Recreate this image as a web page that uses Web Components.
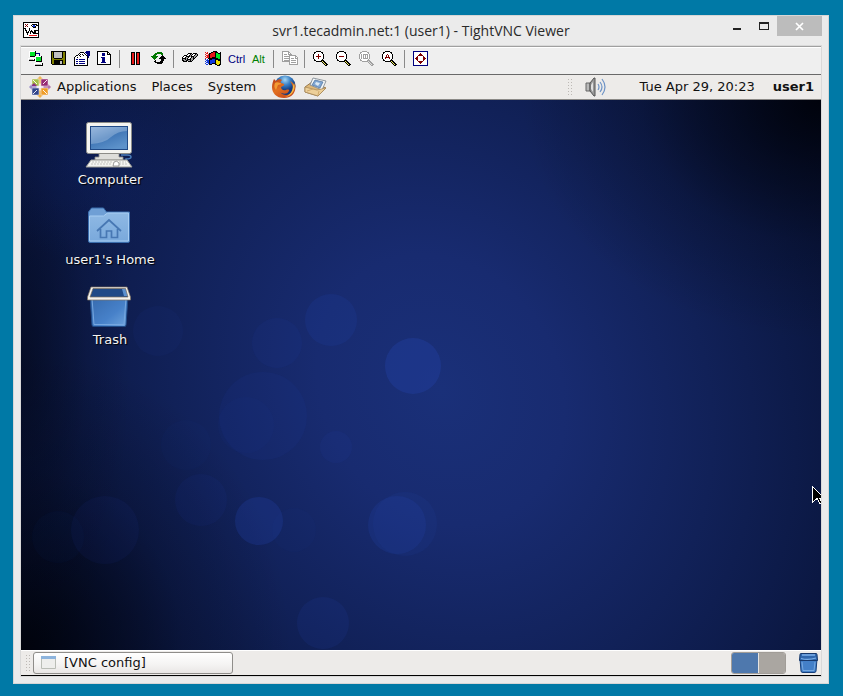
<!DOCTYPE html>
<html lang="en">
<head>
<meta charset="utf-8">
<title>svr1.tecadmin.net:1 (user1) - TightVNC Viewer</title>
<style>
  html, body { height: 100%; margin: 0; }
  body { background: #0079a6; font-family: "DejaVu Sans", sans-serif; font-size: 13px; color: #111; }
</style>
</head>
<body>
<vnc-viewer></vnc-viewer>

<script>
const RESET = `
  button { appearance: none; border: 0; margin: 0; padding: 0; background: none; font: inherit; color: inherit; cursor: default; }
  svg { display: block; flex: none; }
`;

function define(name, html, setup) {
  const template = document.createElement('template');
  template.innerHTML = html;
  customElements.define(name, class extends HTMLElement {
    constructor() {
      super();
      this.attachShadow({ mode: 'open' }).append(template.content.cloneNode(true));
    }
    connectedCallback() { if (setup) setup(this, this.shadowRoot); }
  });
}

/* Pixel icons: one character per pixel, looked up in the palette. */
const PALETTE = {
  K: '#000000', W: '#ffffff', G: '#00e828', N: '#000080', R: '#e81818', D: '#800000',
  O: '#808000', S: '#c0c0c0', A: '#a0a0a0', E: '#007800', Y: '#f0e000', B: '#1038e0',
  P: '#f4f060', L: '#dcdcdc'
};
const PIXELS = {
  vnc: [
    'KKKKKKKKKKKKKKKK','KWWWWWWWWWWWWWWK','KWDWDWWWWKKKKKWK','KWWDWWWWKWBBWKKK','KWDWDWWWWKBBKWWK','KWWWWWWWWWKKKWWK',
    'KKKWWWKWWWWWWWWK','KWKWWWKWWWWWWWWK','KWKKWWKWKWWKKKKK','KWWKWKWKKKWKKWWK','KWWKKKWKWKKKKWWK','KWWWKWWKWWKKKKKK',
    'KWWWKWWWWWWWWWWK','KWWWWWRRRRRRRRWK','KWWWWWWWWWWWWWWK','KKKKKKKKKKKKKKKK'],
  connect: [
    '.WWWWWWK........','.WGGGGGK........','.WGGGGGKNNNN....','.WGGGGGK...N....','.WGGGGGK...N....','.WKKKKKWWWWWWK..',
    '..WWW..WGGGGGK..','WWWWWW.WGGGGGK..','WSSSSWKWGGGGGK..','.KKKKKKWGGGGGK..','.......WKKKKKK..','........WWW.....',
    '......WWWWWWWWK.','......WSSSSSSWK.','.......KKKKKKKK.'],
  save: [
    'KKKKKKKKKKKKKKK.','KOKSSSSSSSSKOOK.','KOKSSSSSSSSKOOK.','KOKSSSSSSSSKOOK.','KOKSSSSSSSSKOOK.','KOKSSSSSSSSKOOK.',
    'KOKSSSSSSSSKOOK.','KOOKKKKKKKKOOOK.','KOOOOOOOOOOOOOK.','KOOKKKKKKKKKOOK.','KOOKKKKKKSSKOOK.','KOOKKKKKKSSKOOK.',
    'KOOKKKKKKSSKOOK.','.KKKKKKKKKKKKKK.'],
  options: [
    '............NNNN','......KKKK.NNNNN','.....KWWWWKWNNNN','....KWKWKWWKWNNN','..KKWKWWWKWWKNNN','.KWWWWKWWWWWWKN.',
    'KWWKWWWWWWWWWKN.','KWWWWWWWWWWWWK..','KWNNWNNNNNNWWK..','KWWWWWWWWWWWWK..','KWNNWNNNNNNWWK..','KWWWWWWWWWWWWK..',
    'KWNNWNNNNNNWWK..','KWWWWWWWWWWWWK..','KKKKKKKKKKKKKK..'],
  info: [
    'KKKKKKKKKKK.....','KWWWWWWWWWKK....','KWWWWNNNWWKWK...','KWWWWNNNWWKKKK..','KWWWWNNNWWWWWK..','KWWWWWWWWWWWWK..',
    'KWWWNNNNWWWWWK..','KWWWWNNNWWWWWK..','KWWWWNNNWWWWWK..','KWWWWNNNWWWWWK..','KWWWWNNNWWWWWK..','KWWWNNNNNWWWWK..',
    'KWWWWWWWWWWWWK..','KKKKKKKKKKKKKK..'],
  pause: [
    '................','...KKKK.KKKK....','...KRRK.KRRK....','...KRRK.KRRK....','...KRRK.KRRK....','...KRRK.KRRK....',
    '...KRRK.KRRK....','...KRRK.KRRK....','...KRRK.KRRK....','...KRRK.KRRK....','...KRRK.KRRK....','...KRRK.KRRK....',
    '...KRRK.KRRK....','...KKKK.KKKK....'],
  refresh: [
    '................','......EEEEE.....','....EEEEEEEE....','...EEE....EE....','..EEE......K....','EEEEEEE...KKK...',
    '.EEEEE...KKKKK..','..EEE...KKKKKKK.','...E......KKK...','....K.....KKK...','...KK....KKK....','....KKKKKKKK....',
    '......KKKKK.....'],
  keys: [
    '................','................','......KKKK.KKKK.','.....KWWKAKWWKAK','..KKKWWKAKWWKAAK','.KWWKKKKAKKKAAK.',
    'KWWKAAKWWKAKAK..','KKKKAKWWKAAKK...','KAAKAKKKKAAK....','KKAAKKAAKAK.....','.KKKK.KKKK......'],
  windows: [
    '........KKKK....','R.R...KKRRKKK..K','.RR.KKRRRRKGGKKK','R..RKRRRRRKGGGGK','.RRRKRRRRRKGGGGK','R.RRKRRRRRKGGGGK',
    '.RRRKRRKKKKGGGGK','R..KKKKKKKKKKGGK','B.B.KKKBBBKKKKKK','.BBBKBBBBBKYYKKK','B.BBKBBBBBKYYYYK','.BBBKBBBBBKYYYYK',
    'B..BKBBKKKKYYYYK','.BB.KKK...KKYYKK','............KKK.'],
  copy: [
    'AAAAAAA.........','AWWWWWAA........','AWWWWWAWA.......','AWAAAWAAAA......','AWWWWWWAAAAAAA..','AWAAAAAAWWWWWAA.',
    'AWWWWWWAWWWWWAWA','AWAAAAAAWAAAWAAA','AWWWWWWAWWWWWWWA','AWAAAAAAWAAAAAWA','AAAAAAAAWWWWWWWA','.......AWAAAAAWA',
    '.......AWWWWWWWA','.......AAAAAAAAA'],
  full: [
    'NNNNNNNNNNNNNNN.','NWWWWWWWWWWWWWN.','NWWWWWWDWWWWWWN.','NWWWWWDDDWWWWWN.','NWWWWDDDDDWWWWN.','NWWWDWWWWWDWWWN.',
    'NWWDDWWWWWDDWWN.','NWDDDWWWWWDDDWN.','NWWDDWWWWWDDWWN.','NWWWDWWWWWDWWWN.','NWWWWDDDDDWWWWN.','NWWWWWDDDWWWWWN.',
    'NWWWWWWDWWWWWWN.','NWWWWWWWWWWWWWN.','NNNNNNNNNNNNNNN.']
};
/* The four magnifiers share one lens and handle; only the mark in the lens differs. */
function lens(mark, off) {
  const rows = [
    '...KKKKK........','.KKWWWWWKK......','.KWWWWWWWK......','KWWWWWWWWWK.....','KWWWWWWWWWK.....','KWWWWWWWWWK.....',
    'KWWWWWWWWWK.....','KWWWWWWWWWK.....','.KWWWWWWWK......','.KKWWWWWKKK.....','...KKKKKKPKK....','.........KPKK...',
    '..........KPKK..','...........KPKK.','............KK..'].map(r => [...r]);
  mark.forEach((line, y) => [...line].forEach((c, x) => { if (c !== '.') rows[y + 2][x + 2] = c; }));
  return rows.map(r => r.join('')).map(r => off ? r.replace(/[KD]/g, 'A').replace(/P/g, 'L') : r);
}
PIXELS.zoomIn = lens(['.......', '...D...', '...D...', '.DDDDD.', '...D...', '...D...']);
PIXELS.zoomOut = lens(['.......', '.......', '.......', '.DDDDD.']);
PIXELS.zoom100 = lens(['.......', 'D.DDDDD', 'D.D.D.D', 'D.D.D.D', 'D.D.D.D', 'D.DDDDD'], true);
PIXELS.zoomAuto = lens(['.......', '...D...', '..D.D..', '..D.D..', '.DDDDD.', '.D...D.']);

define('pixel-icon', `<style>${RESET} :host { display: block; width: 16px; height: 16px; }</style>
<svg width="16" height="16" viewBox="0 0 16 16" shape-rendering="crispEdges" aria-hidden="true"></svg>`, (host, root) => {
  root.querySelector('svg').innerHTML = PIXELS[host.getAttribute('name')].map((row, y) =>
    [...row].map((c, x) => c === '.' ? '' : `<rect x="${x}" y="${y}" width="1" height="1" fill="${PALETTE[c]}"/>`).join('')).join('');
});

define('tool-button', `<style>${RESET}
  :host { display: block; }
  button { display: flex; align-items: center; width: 23px; height: 22px; padding-left: 3px;
    font: 12px "Liberation Sans", Arial, sans-serif; }
</style><button type="button"><slot></slot></button>`, (host, root) => {
  root.querySelector('button').setAttribute('aria-label', host.getAttribute('label'));
});

define('tool-separator', `<style>
  :host { display: flex; justify-content: flex-start; box-sizing: border-box; width: 8px; height: 18px; padding-left: 2px; }
  i { width: 1px; background: #8a8a8a; }
</style><i></i>`);

define('viewer-toolbar', `<style>
  :host { display: flex; align-items: center; height: 24px; padding: 0 4px 3px; background: #efefef;
    border-top: 1px solid #a0a0a0; border-bottom: 1px solid #696969; box-shadow: inset 0 1px #fff; }
  .ctrl, .alt { font-size: 11px; }
  .ctrl { color: #000080; } .alt { padding-left: 1px; color: #008000; }
</style>
<tool-button label="New connection"><pixel-icon name="connect"></pixel-icon></tool-button>
<tool-button label="Save session"><pixel-icon name="save"></pixel-icon></tool-button>
<tool-button label="Connection options"><pixel-icon name="options"></pixel-icon></tool-button>
<tool-button label="Connection info"><pixel-icon name="info"></pixel-icon></tool-button>
<tool-separator></tool-separator>
<tool-button label="Pause"><pixel-icon name="pause"></pixel-icon></tool-button>
<tool-button label="Refresh"><pixel-icon name="refresh"></pixel-icon></tool-button>
<tool-separator></tool-separator>
<tool-button label="Send Ctrl-Alt-Del"><pixel-icon name="keys"></pixel-icon></tool-button>
<tool-button label="Send Win key"><pixel-icon name="windows"></pixel-icon></tool-button>
<tool-button label="Ctrl"><span class="ctrl">Ctrl</span></tool-button>
<tool-button label="Alt"><span class="alt">Alt</span></tool-button>
<tool-separator></tool-separator>
<tool-button label="Transfer files"><pixel-icon name="copy"></pixel-icon></tool-button>
<tool-separator></tool-separator>
<tool-button label="Zoom in"><pixel-icon name="zoomIn"></pixel-icon></tool-button>
<tool-button label="Zoom out"><pixel-icon name="zoomOut"></pixel-icon></tool-button>
<tool-button label="Zoom 100%"><pixel-icon name="zoom100"></pixel-icon></tool-button>
<tool-button label="Zoom auto"><pixel-icon name="zoomAuto"></pixel-icon></tool-button>
<tool-separator></tool-separator>
<tool-button label="Full screen"><pixel-icon name="full"></pixel-icon></tool-button>`);

define('title-bar', `<style>${RESET}
  :host { display: grid; grid-template-columns: 1fr auto 1fr; height: 29px; }
  pixel-icon { margin: 6px 0 0 3px; }
  h1 { margin: 0; font: 14px/30px "Open Sans", "Noto Sans", sans-serif; color: #2a2a2a; white-space: nowrap; }
  .controls { display: flex; justify-content: flex-end; align-items: flex-start; }
  button { display: flex; align-items: center; justify-content: center; width: 27px; height: 20px; }
  .close { width: 45px; background: #bcbcbc; }
</style>
<pixel-icon name="vnc"></pixel-icon>
<h1><slot></slot></h1>
<div class="controls">
  <button type="button" aria-label="Minimize"><svg width="12" height="12"><path d="M2 8h8v2H2z" fill="#222"/></svg></button>
  <button type="button" aria-label="Maximize"><svg width="12" height="12"><path d="M1 2h10v8H1zM2 4v5h8V4z" fill="#222" fill-rule="evenodd"/></svg></button>
  <button type="button" class="close" aria-label="Close"><svg width="10" height="10"><path d="M1 2l7 7M8 2l-7 7" stroke="#fff" stroke-width="1.700" fill="none"/></svg></button>
</div>`);

/* Dotted handle at the edge of a panel applet. */
define('panel-grip', `<style>:host { display: block; } svg { display: block; }</style>
<svg width="6" height="18" shape-rendering="crispEdges" aria-hidden="true">
  <path d="M1 1v17M4 1v17" stroke="#bdb9b5" stroke-dasharray="1 2" transform="translate(.5 0)"/>
</svg>`);

define('gnome-panel', `<style>${RESET}
  :host { display: flex; align-items: center; height: 24px; padding: 0 7px 0 8px; background: #edebe9; border-bottom: 1px solid #8b8986; line-height: 24px; }
  nav, .tray { display: flex; align-items: center; }
  nav { flex: 1; gap: 15px; }
  .apps { display: flex; align-items: center; gap: 6px; }
  .launchers { display: flex; align-items: center; gap: 7px; }
  .volume { margin: 0 31px 0 11px; }
  .user { margin-left: 18px; font-weight: bold; }
</style>
<nav>
  <button type="button" class="apps">
    <svg width="22" height="22" viewBox="0 0 22 22">
      <path d="M11 0l4 4v4l-4 3-4-3V4z" fill="#f0b85c"/><path d="M22 11l-4 4h-4l-3-4 3-4h4z" fill="#b274ab"/>
      <path d="M11 22l-4-4v-4l4-3 4 3v4z" fill="#eeb04a"/><path d="M0 11l4-4h4l3 4-3 4H4z" fill="#9a8cc8"/>
      <g stroke="#f4f0f4" stroke-width=".5">
        <path d="M3 3h7v7H3z" fill="#a5bf45"/><path d="M12 3h7v7h-7z" fill="#982a74"/>
        <path d="M3 12h7v7H3z" fill="#31458c"/><path d="M12 12h7v7h-7z" fill="#ee9c27"/>
      </g>
      <path d="M3 9l2-2 3 3H3z" fill="#8b2d84"/>
      <path d="M4 4l4 4M18 4l-4 4M4 18l4-4M18 18l-4-4" stroke="#fff" stroke-width=".9"/>
      <path d="M7.500 11h7M11 7.500v7" stroke="#fff" stroke-width="1.300"/>
    </svg>
    Applications</button>
  <button type="button">Places</button>
  <button type="button">System</button>
  <div class="launchers">
    <button type="button" aria-label="Firefox">
      <svg width="26" height="24" viewBox="0 0 26 24">
        <defs><radialGradient id="sea" cx=".5" cy=".2"><stop offset="0" stop-color="#a6d8f5"/><stop offset=".5" stop-color="#3c83c7"/><stop offset="1" stop-color="#143c80"/></radialGradient>
        <linearGradient id="fur" x2=".7" y2="1"><stop offset="0" stop-color="#b83c18"/><stop offset=".5" stop-color="#e2701f"/><stop offset="1" stop-color="#c8481a"/></linearGradient></defs>
        <circle cx="14" cy="11" r="10.500" fill="url(#sea)"/>
        <path d="M3 4l2 2c2-2 5-2 6-1-1 1-2 2-1 3l3 1c1 1-1 2-3 3 0 2 2 4 5 3 2-1 4 0 3 1-2 4-7 3-9 1 3 4 10 4 12-1 2-4 0-7-2-10 4 2 4 4 4 5l1-3c2 9-3 15-11 15S1 18 1 12c0-3 1-6 2-8z" fill="url(#fur)"/>
        <path d="M23 8c2 7-2 13-9 14 5-2 8-6 8-11z" fill="#f5bc45"/>
        <path d="M4 8c1-1 3-1 5 0l2 1-4 1-2 5c-2-2-2-5-1-7z" fill="#f39a32"/>
      </svg></button>
    <button type="button" aria-label="Evolution Mail">
      <svg width="24" height="22" viewBox="0 0 24 22">
        <path d="M1 11L8 6l14 6-8 8-13-4z" fill="#dfb878" stroke="#9a7a4c"/>
        <path d="M9 2l13 3-4 9-12-5z" fill="#f4f6f7" stroke="#77818a" stroke-width=".8"/>
        <path d="M11 4l8 2-3 6-8-3z" fill="#7fa6d3" stroke="#4b6f9b" stroke-width=".7"/>
        <path d="M12 6l4 1-2 3-3-2z" fill="#dce8f2"/>
        <path d="M1 11l12 3 9-2-8 8-13-4z" fill="#edcf98" stroke="#a98a5c" stroke-width=".8"/>
        <path d="M3 15l6-2M14 19l1-4" fill="none" stroke="#c9a160" stroke-width=".8"/>
      </svg></button>
  </div>
</nav>
<div class="tray">
  <panel-grip></panel-grip>
  <button type="button" class="volume" aria-label="Volume">
    <svg width="24" height="22" viewBox="0 0 24 22">
      <path d="M2 7h4v8H2z" fill="#b8b8b8" stroke="#666"/><path d="M6 7l4-5h1v18h-1l-4-5z" fill="#999" stroke="#555"/>
      <path d="M7 9l2-3v10l-2-3z" fill="#e0e0e0"/>
      <path d="M14 8q2 3 0 6M16 6q4 5 0 10M18 3q6 8 0 16" fill="none" stroke="#6d93c6" stroke-width="1.200"/>
    </svg></button>
  <time datetime="04-29T20:23">Tue Apr 29, 20:23</time>
  <button type="button" class="user">user1</button>
</div>`);

define('desktop-icon', `<style>${RESET}
  :host { display: block; }
  button { display: flex; flex-direction: column; align-items: center; width: 100px; height: 80px;
    color: #f4f4f4; text-shadow: 1px 1px 1px #000; line-height: 24px; white-space: nowrap; }
  ::slotted(svg) { display: block; flex: none; width: 48px; height: 48px; margin-right: 2px; }
</style><button type="button"><slot name="icon"></slot><slot></slot></button>`);

define('remote-desktop', `<style>
  :host { display: block; position: relative; flex: 1; overflow: hidden; background: #02050f; }
  .wallpaper, .pointer { position: absolute; display: block; }
  .wallpaper { inset: 0; width: 100%; height: 100%; }
  .pointer { right: -6px; top: 70%; }
  .icons { position: relative; display: flex; flex-direction: column; padding: 20px 0 0 39px; }
</style>
<svg class="wallpaper" viewBox="0 0 800 550" preserveAspectRatio="xMidYMid slice" aria-hidden="true">
  <defs>
    <radialGradient id="glow" gradientUnits="userSpaceOnUse" cx="0" cy="0" r="1" gradientTransform="translate(420 290) rotate(60) scale(560 470)">
      <stop offset="0" stop-color="#1a3079"/><stop offset=".25" stop-color="#182b70"/><stop offset=".55" stop-color="#112158"/>
      <stop offset=".8" stop-color="#0b1843"/><stop offset="1" stop-color="#071133"/>
    </radialGradient>
    <radialGradient id="dark"><stop offset="0" stop-color="#00020a" stop-opacity=".95"/><stop offset=".3" stop-color="#00020a" stop-opacity=".55"/><stop offset=".6" stop-color="#00020a" stop-opacity=".2"/><stop offset="1" stop-color="#00020a" stop-opacity="0"/></radialGradient>
    <radialGradient id="lift"><stop offset="0" stop-color="#102a80" stop-opacity=".25"/><stop offset="1" stop-color="#102a80" stop-opacity="0"/></radialGradient>
  </defs>
  <rect width="800" height="550" fill="url(#glow)"/>
  <ellipse cx="800" cy="0" rx="300" ry="240" fill="url(#dark)"/>
  <ellipse cx="0" cy="550" rx="270" ry="300" fill="url(#dark)"/>
  <ellipse cx="0" cy="260" rx="110" ry="330" fill="url(#dark)" opacity=".5"/>
  <ellipse cx="60" cy="60" rx="110" ry="100" fill="url(#lift)"/>
  <g fill="#2445ae">
    <circle cx="392" cy="266" r="28" opacity=".32"/><circle cx="310" cy="220" r="26" opacity=".18"/>
    <circle cx="256" cy="243" r="25" opacity=".09"/><circle cx="137" cy="231" r="25" opacity=".07"/>
    <circle cx="242" cy="316" r="44" opacity=".09"/><circle cx="225" cy="325" r="28" opacity=".06"/>
    <circle cx="238" cy="421" r="24" opacity=".25"/><circle cx="180" cy="400" r="26" opacity=".08"/>
    <circle cx="84" cy="430" r="34" opacity=".08"/><circle cx="165" cy="345" r="25" opacity=".04"/>
    <circle cx="376" cy="425" r="29" opacity=".2"/><circle cx="384" cy="424" r="32" opacity=".11"/>
    <circle cx="302" cy="523" r="26" opacity=".13"/><circle cx="315" cy="347" r="16" opacity=".1"/>
    <circle cx="37" cy="437" r="26" opacity=".04"/><circle cx="273" cy="430" r="22" opacity=".04"/>
  </g>
</svg>
<div class="icons">
  <desktop-icon>
    <svg slot="icon" viewBox="0 0 48 48">
      <defs><linearGradient id="screen" x2=".6" y2="1"><stop offset="0" stop-color="#84a8d4"/><stop offset=".55" stop-color="#4379b8"/><stop offset="1" stop-color="#5d92ca"/></linearGradient></defs>
      <path d="M14 33h20v4h4v3H10v-3h4z" fill="#dededa" stroke="#8a8a85" stroke-width=".8"/>
      <rect x="1.500" y="2.500" width="45" height="31" rx="2" fill="#f5f5f1" stroke="#8d8d88"/>
      <rect x="5.500" y="6.500" width="37" height="23" fill="url(#screen)" stroke="#204a87"/>
      <path d="M6 24q14-1 20-7 7-6 16-6V7H6z" fill="#c2d8ef" opacity=".35"/>
      <path d="M36 35h6q4 0 4 2t-5 2v3" fill="none" stroke="#4a7cba" stroke-width="1.500"/>
      <path d="M6 40h36l5 7H1z" fill="#f4f4f0" stroke="#9a9a95"/>
      <path d="M7 42h20M6 44h21M34 42h7M34 44h8" stroke="#c4c4bf" stroke-dasharray="2 1"/>
      <path d="M29 42q3-2 5 1v3h-6z" fill="#fff" stroke="#777" stroke-width=".7"/>
    </svg>Computer</desktop-icon>
  <desktop-icon>
    <svg slot="icon" viewBox="0 0 48 48">
      <defs><linearGradient id="folder" y2="1" x2="0"><stop offset="0" stop-color="#8fb9e4"/><stop offset="1" stop-color="#7aa9dc"/></linearGradient></defs>
      <path d="M3.500 41V12l3-4h12l3 4h23v29q0 1.500-1.500 1.500h-38q-1.500 0-1.500-1.500z" fill="#6f9fd5" stroke="#3b6eae"/>
      <path d="M4.500 41V16h14l4-3h21v28z" fill="url(#folder)" stroke="#a8cdf2"/>
      <path d="M12 31l12-11 12 11M15.500 29v8.500h6V31h5v6.500h6V29" fill="none" stroke="#4777b3" stroke-width="1.700"/>
    </svg>user1's Home</desktop-icon>
  <desktop-icon>
    <svg slot="icon" viewBox="0 0 48 48">
      <defs><linearGradient id="bin" x2="1" y2="1"><stop offset="0" stop-color="#3569ac"/><stop offset=".6" stop-color="#4781c9"/><stop offset="1" stop-color="#70a5dd"/></linearGradient></defs>
      <path d="M5 16h38l-2 29q0 1.500-2 1.500H9q-2 0-2-1.500z" fill="url(#bin)" stroke="#1f4a86"/>
      <path d="M7 18l2 26.500h30L41 18" fill="none" stroke="#76a7df"/>
      <path d="M6 7h36l3 10H3z" fill="#204a87"/>
      <path d="M37 9l3-1 3 8h-4z" fill="#5b90cf"/>
      <path d="M6 7h36l3.500 10v3h-43v-3z M8 8.500L5 17h38l-2.500-8.500z" fill="#f3f2ee" fill-rule="evenodd" stroke="#80715e" stroke-width=".7"/>
    </svg>Trash</desktop-icon>
</div>
<svg class="pointer" width="16" height="20" viewBox="0 0 16 20" shape-rendering="crispEdges" aria-hidden="true">
  <path d="M1.500 1.500l12 12H9l2 4-2 1-3-5-4.500 4z" fill="#000" stroke="#fff"/>
</svg>`);

define('task-bar', `<style>${RESET}
  :host { display: flex; align-items: center; height: 25px; padding: 0 2px 0 4px; background: #edebe9;
    border-bottom: 1px solid #000; box-shadow: inset 0 1px #fff; }
  .task { display: flex; align-items: center; gap: 8px; width: 200px; height: 22px; padding: 0 7px; margin: 0 auto 0 2px;
    border: 1px solid #8f8d8a; border-radius: 3px; background: linear-gradient(#fff, #f4f3f2 60%, #e9e7e5); line-height: 18px; }
  .spaces { display: flex; gap: 1px; margin-right: 11px; border: 1px solid #a19d98; border-radius: 3px; overflow: hidden; background: #e6e4e1; }
  .spaces button { width: 26px; height: 20px; background: #aaa6a1; }
  .spaces button[aria-pressed=true] { background: #4e78ad; }
</style>
<panel-grip></panel-grip>
<button type="button" class="task">
  <svg width="15" height="13"><path d="M.5.5h14v12H.5z" fill="#eeeeec" stroke="#babdb6"/><path d="M0 0h15v3H0z" fill="#8db4dd"/></svg>
  [VNC config]</button>
<div class="spaces">
  <button type="button" aria-label="Workspace 1" aria-pressed="true"></button>
  <button type="button" aria-label="Workspace 2" aria-pressed="false"></button>
</div>
<button type="button" aria-label="Trash">
  <svg width="22" height="22" viewBox="0 0 22 22">
    <path d="M3 7h17l-1 12q0 1.500-2 1.500H6Q4 20.500 4 19z" fill="#4480c8" stroke="#173f7a"/>
    <path d="M5 10l1 8.500h11l1-8.500" fill="none" stroke="#76a8e0"/>
    <path d="M4 1.500h15q1 0 1 1l.500 6h-18l.500-6q0-1 1-1z" fill="#3067ad" stroke="#17386b"/>
    <path d="M5 3h13M4 6.500q7 2 15-.500" fill="none" stroke="#7cb0ea" stroke-width="1.300"/>
  </svg></button>`);

define('vnc-viewer', `<style>
  :host { display: flex; box-sizing: border-box; min-height: 100vh; padding: 15px 14px 12px 13px; }
  main { display: flex; flex-direction: column; flex: 1; min-width: 0; padding: 0 6px 6px; background: #ebebeb; border: 1px solid #d6d6d6; }
  .client { display: flex; flex-direction: column; flex: 1; border: 1px solid #d9d9d9; }
</style>
<main>
  <title-bar>svr1.tecadmin.net:1 (user1) - TightVNC Viewer</title-bar>
  <div class="client">
    <viewer-toolbar></viewer-toolbar>
    <gnome-panel></gnome-panel>
    <remote-desktop></remote-desktop>
    <task-bar></task-bar>
  </div>
</main>`);
</script>
</body>
</html>
